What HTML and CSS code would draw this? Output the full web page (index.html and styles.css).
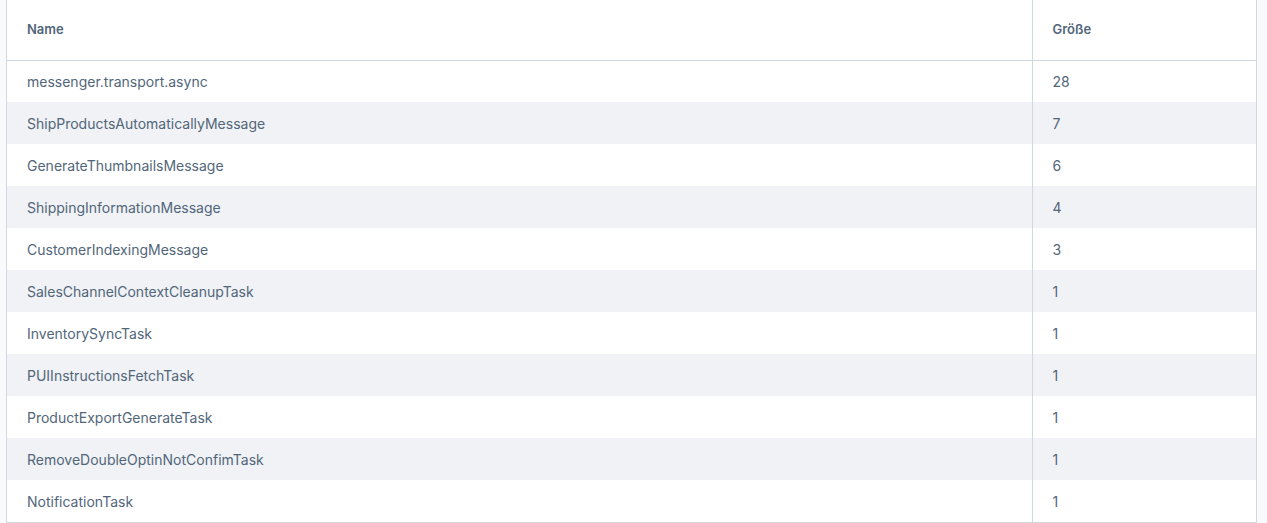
FILE: index.html
```html
<!DOCTYPE html>
<html lang="de">
<head>
<meta charset="utf-8">
<title>Queue</title>
<link rel="stylesheet" href="styles.css">
</head>
<body>
<div class="page">
  <div class="card">
    <table class="grid">
      <thead>
        <tr><th class="col-name">Name</th><th class="col-size">Größe</th></tr>
      </thead>
      <tbody>
        <tr><td>messenger.transport.async</td><td>28</td></tr>
        <tr><td>ShipProductsAutomaticallyMessage</td><td>7</td></tr>
        <tr><td>GenerateThumbnailsMessage</td><td>6</td></tr>
        <tr><td>ShippingInformationMessage</td><td>4</td></tr>
        <tr><td>CustomerIndexingMessage</td><td>3</td></tr>
        <tr><td>SalesChannelContextCleanupTask</td><td>1</td></tr>
        <tr><td>InventorySyncTask</td><td>1</td></tr>
        <tr><td>PUIInstructionsFetchTask</td><td>1</td></tr>
        <tr><td>ProductExportGenerateTask</td><td>1</td></tr>
        <tr><td>RemoveDoubleOptinNotConfimTask</td><td>1</td></tr>
        <tr><td>NotificationTask</td><td>1</td></tr>
      </tbody>
    </table>
  </div>
</div>
</body>
</html>
```

FILE: styles.css
```css
html, body {
  margin: 0;
  padding: 0;
  background: #f9fafb;
  font-family: Inter, "Noto Sans", sans-serif;
}
.page {
  padding: 0 10px 0 6px;
}
.card {
  width: 1251px;
  box-sizing: border-box;
  background: #fff;
  border: 1px solid #d1d9e0;
  border-top: none;
}
.grid {
  width: 100%;
  border-collapse: collapse;
  table-layout: fixed;
}
.grid th {
  height: 60px;
  padding: 0 20px 1px;
  text-align: left;
  font-size: 13px;
  font-weight: 600;
  color: #52667a;
  border-bottom: 1px solid #d1d9e0;
  box-sizing: border-box;
}
.grid th.col-name { width: 1025px; }
.grid td {
  height: 42px;
  padding: 0 20px;
  font-size: 14px;
  color: #52667a;
  box-sizing: border-box;
}
.grid th + th, .grid td + td {
  border-left: 1px solid #d1d9e0;
}
.grid tbody tr:nth-child(even) td {
  background: #f0f2f5;
}
```
